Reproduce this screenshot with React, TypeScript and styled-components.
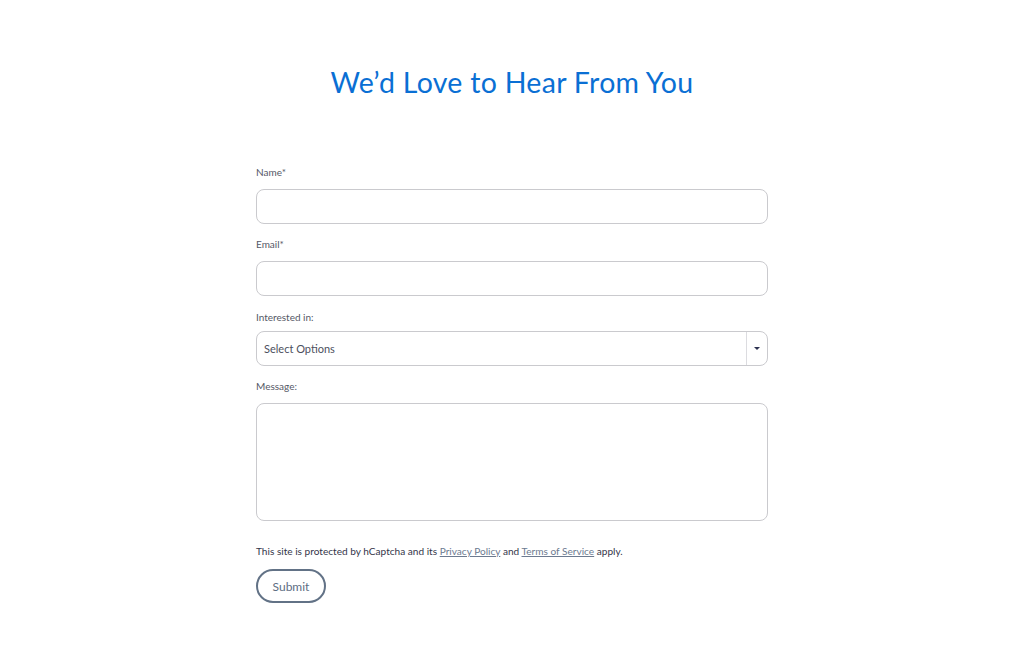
import styled, { createGlobalStyle } from "styled-components";

const GlobalStyle = createGlobalStyle`
  html, body {
    margin: 0;
    padding: 0;
    background: #ffffff;
    font-family: "Lato", "Open Sans", sans-serif;
  }
`;

const Page = styled.main`
  display: flex;
  flex-direction: column;
  align-items: center;
  padding-top: 64px;
`;

const Title = styled.h1`
  margin: 0;
  font-family: "Lato", sans-serif;
  font-weight: 400;
  font-size: 28.5px;
  line-height: 36px;
  color: #0a6fd4;
  letter-spacing: 0.3px;
`;

const Form = styled.form`
  width: 512px;
  margin-top: 65px;
  display: flex;
  flex-direction: column;
`;

const Label = styled.label<{ $space?: number }>`
  display: block;
  font-size: 10px;
  line-height: 14px;
  color: #555866;
  margin-bottom: ${(p) => p.$space ?? 10}px;
`;

const Field = styled.div<{ $gap?: number }>`
  margin-bottom: ${(p) => p.$gap ?? 13}px;
`;

const Input = styled.input`
  box-sizing: border-box;
  display: block;
  width: 100%;
  height: 35px;
  border: 1px solid #cacace;
  border-radius: 8px;
  background: #fff;
  padding: 0 8px;
  font: inherit;
`;

const SelectBox = styled.div`
  box-sizing: border-box;
  display: flex;
  align-items: stretch;
  width: 100%;
  height: 35px;
  border: 1px solid #cacace;
  border-radius: 8px;
`;

const SelectText = styled.span`
  flex: 1;
  display: flex;
  align-items: center;
  padding-left: 7px;
  font-size: 11px;
  color: #4c4f5e;
`;

const Caret = styled.span`
  width: 20px;
  border-left: 1px solid #dcdce0;
  display: flex;
  align-items: center;
  justify-content: center;
  &::after {
    content: "";
    border-left: 3px solid transparent;
    border-right: 3px solid transparent;
    border-top: 3px solid #2c3150;
  }
`;

const TextArea = styled.textarea`
  box-sizing: border-box;
  display: block;
  width: 100%;
  height: 118px;
  border: 1px solid #cacace;
  border-radius: 8px;
  resize: none;
  font: inherit;
`;

const Notice = styled.p`
  margin: 0 0 11px;
  font-size: 10.1px;
  line-height: 14px;
  color: #34364a;
  a {
    color: #6c7a90;
    text-decoration: underline;
  }
`;

const Submit = styled.button`
  align-self: flex-start;
  width: 70px;
  height: 34px;
  border: 2px solid #627286;
  border-radius: 17px;
  background: #fff;
  color: #5d6d82;
  font-family: "Lato", sans-serif;
  font-size: 12px;
  cursor: pointer;
`;

export default function App() {
  return (
    <>
      <GlobalStyle />
      <Page>
        <Title>We’d Love to Hear From You</Title>
        <Form onSubmit={(e) => e.preventDefault()}>
          <Field>
            <Label>Name*</Label>
            <Input type="text" />
          </Field>
          <Field $gap={14}>
            <Label>Email*</Label>
            <Input type="email" />
          </Field>
          <Field>
            <Label $space={7}>Interested in:</Label>
            <SelectBox>
              <SelectText>Select Options</SelectText>
              <Caret />
            </SelectBox>
          </Field>
          <Field $gap={23}>
            <Label>Message:</Label>
            <TextArea />
          </Field>
          <Notice>
            This site is protected by hCaptcha and its <a href="#">Privacy Policy</a> and{" "}
            <a href="#">Terms of Service</a> apply.
          </Notice>
          <Submit type="submit">Submit</Submit>
        </Form>
      </Page>
    </>
  );
}
